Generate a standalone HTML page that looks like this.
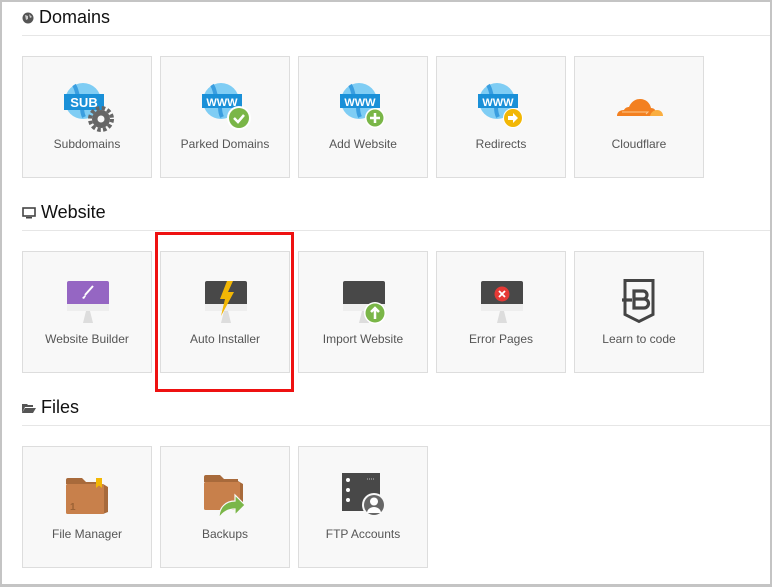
<!DOCTYPE html>
<html><head><meta charset="utf-8"><style>
*{margin:0;padding:0;box-sizing:border-box}
body{width:772px;height:587px;background:#fff;font-family:"Liberation Sans",sans-serif;position:relative;overflow:hidden}
.frame{position:absolute;left:0;top:0;width:772px;height:587px;border:2px solid #c4c4c4;border-bottom-width:3px}
h2{position:absolute;left:22px;font-size:18px;font-weight:normal;color:#111;display:flex;align-items:center;gap:5px}
.hr{position:absolute;left:22px;right:2px;height:1px;background:#e6e6e6}
.tile{position:absolute;width:130px;height:122px;background:#f8f8f8;border:1px solid #ddd}
.tile svg{position:absolute;left:35px;top:20px}
.tile span{position:absolute;left:0;right:0;top:80px;text-align:center;font-size:12px;color:#555}
.red{position:absolute;left:155px;top:232px;width:139px;height:160px;border:3px solid #ee1111}
</style></head><body>
<div class="frame"></div>

<h2 style="top:7px"><svg width="12" height="12" viewBox="0 0 12 12"><circle cx="6" cy="6" r="5.5" fill="#555"/><path d="M3 3l3 1 0 3-2 1z M7 2l3 3-2 1z" fill="#ccc"/></svg>Domains</h2>
<div class="hr" style="top:35px"></div>

<h2 style="top:202px"><svg width="14" height="12" viewBox="0 0 14 12"><rect x="1" y="1" width="12" height="8" fill="none" stroke="#444" stroke-width="1.6"/><rect x="4" y="10" width="6" height="1.5" fill="#444"/></svg>Website</h2>
<div class="hr" style="top:230px"></div>

<h2 style="top:397px"><svg width="14" height="12" viewBox="0 0 14 12"><path d="M0 2h5l1 1h5v2H3L0 11z" fill="#555"/><path d="M3 6h11l-3 5H0z" fill="#555"/></svg>Files</h2>
<div class="hr" style="top:425px"></div>

<!-- Domains -->
<div class="tile" style="left:22px;top:56px"><svg width="60" height="56" viewBox="0 0 60 56">
<circle cx="25" cy="24" r="18" fill="#7fcdf4"/><path d="M16 8c4 6 2 10 6 14s0 10 4 18" stroke="#3a9ee0" stroke-width="4" fill="none"/>
<rect x="6" y="17" width="40" height="16" fill="#1a90d8"/><text x="26" y="30" text-anchor="middle" font-size="13" font-weight="bold" fill="#fff" font-family="Liberation Sans">SUB</text>
<circle cx="43" cy="42" r="9" fill="#666"/><circle cx="43" cy="42" r="11" fill="none" stroke="#666" stroke-width="4" stroke-dasharray="3.5 2.3"/><circle cx="43" cy="42" r="3.5" fill="#f8f8f8"/></svg><span>Subdomains</span></div>

<div class="tile" style="left:160px;top:56px"><svg width="60" height="56" viewBox="0 0 60 56">
<circle cx="25" cy="24" r="18" fill="#7fcdf4"/><path d="M16 8c4 6 2 10 6 14s0 10 4 18" stroke="#3a9ee0" stroke-width="4" fill="none"/>
<rect x="6" y="17" width="40" height="14" fill="#1a90d8"/><text x="26" y="29" text-anchor="middle" font-size="11" font-weight="bold" fill="#fff" font-family="Liberation Sans">WWW</text>
<circle cx="43" cy="41" r="12" fill="#fff"/><circle cx="43" cy="41" r="10" fill="#7ab648"/><path d="M38 41l4 4 6-7" stroke="#fff" stroke-width="2.5" fill="none"/></svg><span>Parked Domains</span></div>

<div class="tile" style="left:298px;top:56px"><svg width="60" height="56" viewBox="0 0 60 56">
<circle cx="25" cy="24" r="18" fill="#7fcdf4"/><path d="M16 8c4 6 2 10 6 14s0 10 4 18" stroke="#3a9ee0" stroke-width="4" fill="none"/>
<rect x="6" y="17" width="40" height="14" fill="#1a90d8"/><text x="26" y="29" text-anchor="middle" font-size="11" font-weight="bold" fill="#fff" font-family="Liberation Sans">WWW</text>
<circle cx="41" cy="41" r="10" fill="#fff"/><circle cx="41" cy="41" r="8.5" fill="#7ab648"/><path d="M41 36v10M36 41h10" stroke="#fff" stroke-width="2.5"/></svg><span>Add Website</span></div>

<div class="tile" style="left:436px;top:56px"><svg width="60" height="56" viewBox="0 0 60 56">
<circle cx="25" cy="24" r="18" fill="#7fcdf4"/><path d="M16 8c4 6 2 10 6 14s0 10 4 18" stroke="#3a9ee0" stroke-width="4" fill="none"/>
<rect x="6" y="17" width="40" height="14" fill="#1a90d8"/><text x="26" y="29" text-anchor="middle" font-size="11" font-weight="bold" fill="#fff" font-family="Liberation Sans">WWW</text>
<circle cx="41" cy="41" r="10" fill="#fff"/><circle cx="41" cy="41" r="9" fill="#f2b705"/><path d="M36 39h5v-3l5 5-5 5v-3h-5z" fill="#fff"/></svg><span>Redirects</span></div>

<div class="tile" style="left:574px;top:56px"><svg width="60" height="56" viewBox="0 0 60 56">
<path d="M7 39c0-4 3-6 7-6 1-2 3-3 5-3 2-5 6-8 11-8 6 0 10 4 11 9 3 0 5 2 5 5l-2 3z" fill="#f38020"/>
<path d="M40 39c1-4 4-6 7-6 4 0 6 3 6 6z" fill="#faae40"/><path d="M12 35h26l-2 2" stroke="#fcc78c" stroke-width="1" fill="none"/></svg><span>Cloudflare</span></div>

<!-- Website -->
<div class="tile" style="left:22px;top:251px"><svg width="60" height="56" viewBox="0 0 60 56">
<rect x="9" y="9" width="42" height="28" rx="2" fill="#9566c3"/><rect x="9" y="32" width="42" height="7" fill="#eee"/><path d="M25 51l3-12h4l3 12z" fill="#ddd"/>
<path d="M27 23l8-9" stroke="#fff" stroke-width="2"/><path d="M24 26l3-3 1 1-2 3z" fill="#fff"/></svg><span>Website Builder</span></div>

<div class="tile" style="left:160px;top:251px"><svg width="60" height="56" viewBox="0 0 60 56">
<rect x="9" y="9" width="42" height="28" rx="2" fill="#484848"/><rect x="9" y="32" width="42" height="7" fill="#eee"/><path d="M25 51l3-12h4l3 12z" fill="#ddd"/>
<path d="M31 9h6l-5 11h6l-13 24 4-17h-5z" fill="#f2b705"/></svg><span>Auto Installer</span></div>

<div class="tile" style="left:298px;top:251px"><svg width="60" height="56" viewBox="0 0 60 56">
<rect x="9" y="9" width="42" height="28" rx="2" fill="#484848"/><rect x="9" y="32" width="42" height="7" fill="#eee"/><path d="M25 51l3-12h4l3 12z" fill="#ddd"/>
<circle cx="41" cy="41" r="11" fill="#fff"/><circle cx="41" cy="41" r="9.5" fill="#7ab648"/><path d="M41 47v-10M37 40l4-4 4 4" stroke="#fff" stroke-width="2.5" fill="none"/></svg><span>Import Website</span></div>

<div class="tile" style="left:436px;top:251px"><svg width="60" height="56" viewBox="0 0 60 56">
<rect x="9" y="9" width="42" height="28" rx="2" fill="#484848"/><rect x="9" y="32" width="42" height="7" fill="#eee"/><path d="M25 51l3-12h4l3 12z" fill="#ddd"/>
<circle cx="30" cy="22" r="7.5" fill="#e53935"/><path d="M27 19l6 6M33 19l-6 6" stroke="#fff" stroke-width="1.8"/></svg><span>Error Pages</span></div>

<div class="tile" style="left:574px;top:251px"><svg width="60" height="56" viewBox="0 0 60 56">
<path d="M15 8.5h28v34l-14 7-14-7z" fill="none" stroke="#444" stroke-width="3"/>
<path d="M12 28h10M24 19h9a4 4 0 0 1 0 8h-9zM24 27h10a4.5 4.5 0 0 1 0 9h-10z" fill="none" stroke="#444" stroke-width="3.2"/></svg><span>Learn to code</span></div>

<!-- Files -->
<div class="tile" style="left:22px;top:446px"><svg width="60" height="56" viewBox="0 0 60 56">
<path d="M8 17v-4a2 2 0 0 1 2-2h14l4 4h14v3z" fill="#a86a3b"/><path d="M45 17l5 3v25l-5 2z" fill="#a86a3b"/><rect x="8" y="17" width="38" height="30" rx="1.5" fill="#c8804b"/>
<path d="M38 11h6v10l-3-2.5-3 2.5z" fill="#f2b705"/><text x="12" y="43" font-size="10" font-weight="bold" fill="#9c6234" font-family="Liberation Sans">1</text></svg><span>File Manager</span></div>

<div class="tile" style="left:160px;top:446px"><svg width="60" height="56" viewBox="0 0 60 56">
<path d="M8 15v-5a2 2 0 0 1 2-2h14l4 4h14v3z" fill="#a86a3b"/><path d="M42 14l5 3v22l-5 1z" fill="#a86a3b"/><rect x="8" y="15" width="36" height="28" rx="1.5" fill="#c8804b"/>
<path d="M23 51c0-11 7-17 16-17v-6l10 10-10 10v-6c-7 0-12 3-16 9z" fill="#7ab648" stroke="#f8f8f8" stroke-width="1.2"/></svg><span>Backups</span></div>

<div class="tile" style="left:298px;top:446px"><svg width="60" height="56" viewBox="0 0 60 56">
<rect x="8" y="6" width="38" height="38" fill="#484848"/><circle cx="14" cy="13" r="2" fill="#fff"/><circle cx="14" cy="23" r="2" fill="#fff"/><circle cx="14" cy="33" r="2" fill="#fff"/>
<path d="M33 12h8" stroke="#bbb" stroke-width="1" stroke-dasharray="1 1"/>
<circle cx="40" cy="38" r="12" fill="#f8f8f8"/><circle cx="40" cy="38" r="10" fill="#666"/><circle cx="40" cy="34.5" r="4" fill="#fff"/><path d="M33 46a7 6 0 0 1 14 0z" fill="#fff"/></svg><span>FTP Accounts</span></div>

<div class="red"></div>
</body></html>
